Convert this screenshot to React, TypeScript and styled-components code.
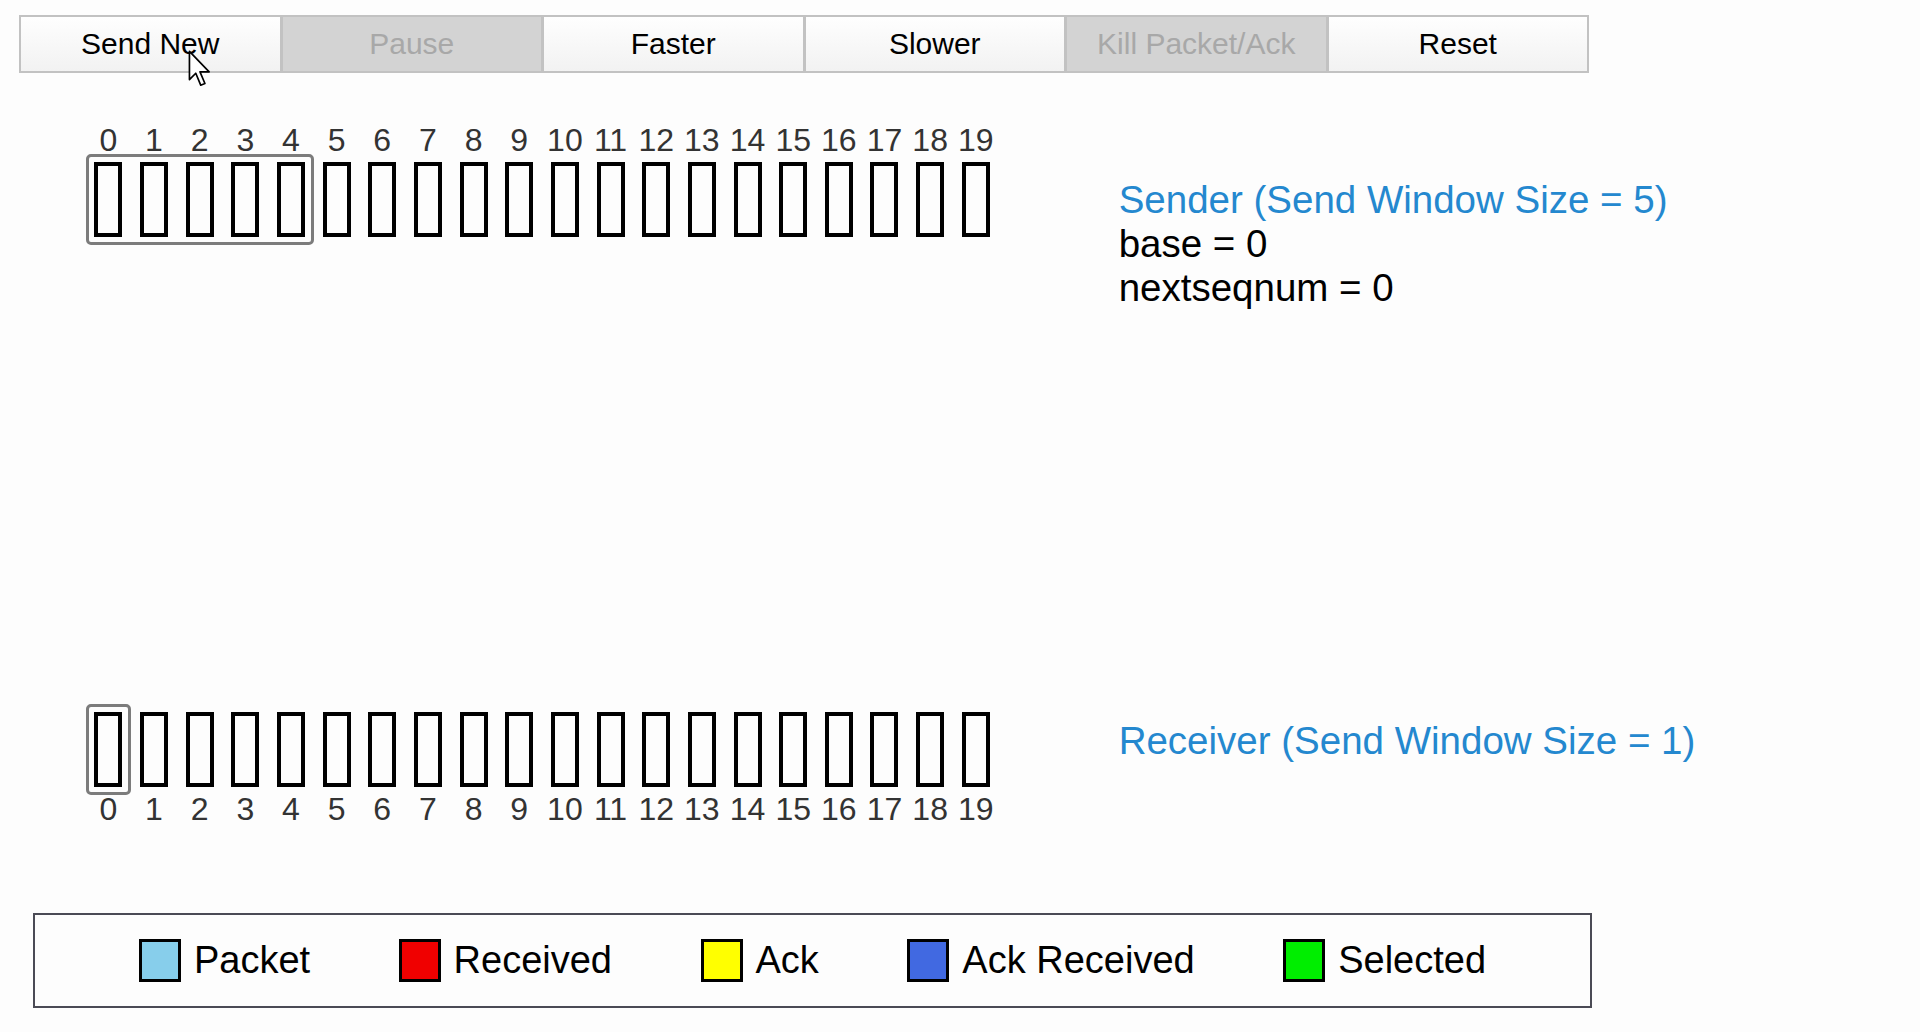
import React from "react";
import styled, { createGlobalStyle } from "styled-components";

const GlobalStyle = createGlobalStyle`
  html, body {
    margin: 0;
    padding: 0;
    background: #fdfdfd;
  }
  body {
    font-family: "Liberation Sans", Arial, sans-serif;
    color: #000;
  }
`;

const Page = styled.div`
  position: relative;
  width: 1920px;
  height: 1032px;
  overflow: hidden;
  padding-top: 15px;
  box-sizing: border-box;
`;

const Toolbar = styled.div`
  position: relative;
  display: flex;
  margin-left: 20px;
  width: 1569px;
  height: 58px;
`;

const ToolButton = styled.button<{ $off?: boolean }>`
  flex: 1;
  height: 58px;
  margin: 0 0 0 -1px;
  padding: 0;
  border: 2px solid #c2c2c2;
  background: ${(p) => (p.$off ? "#d3d3d3" : "linear-gradient(#fefefe, #f2f2f2)")};
  color: ${(p) => (p.$off ? "#a8a8a8" : "#000")};
  font-family: "Liberation Sans", Arial, sans-serif;
  font-size: 30px;
  cursor: default;
`;

const Pointer = styled.svg`
  position: absolute;
  left: 168px;
  top: 35px;
`;

const Lane = styled.section<{ $gap: number }>`
  display: flex;
  align-items: flex-start;
  height: 119px;
  margin-top: ${(p) => p.$gap}px;
`;

const SeqGrid = styled.div<{ $digitsFirst: boolean }>`
  display: grid;
  grid-template-columns: repeat(20, 45.67px);
  grid-template-rows: ${(p) => (p.$digitsFirst ? "28px 91px" : "91px 28px")};
  margin-left: 85.5px;
`;

const SeqNum = styled.span<{ $row: number; $col: number }>`
  grid-row: ${(p) => p.$row};
  grid-column: ${(p) => p.$col};
  justify-self: center;
  font-size: 32px;
  line-height: 28px;
  color: #333;
`;

const Slot = styled.div<{ $row: number; $col: number }>`
  grid-row: ${(p) => p.$row};
  grid-column: ${(p) => p.$col};
  justify-self: center;
  align-self: center;
  width: 28px;
  height: 75px;
  box-sizing: border-box;
  border: 4px solid #000;
  background: #fdfdfd;
`;

const Window = styled.div<{ $row: number; $span: number }>`
  grid-row: ${(p) => p.$row};
  grid-column: 1 / span ${(p) => p.$span};
  border: 3px solid #7c7c7c;
  border-radius: 5px;
  z-index: 1;
  pointer-events: none;
`;

const Info = styled.div<{ $offset: number }>`
  flex-shrink: 0;
  margin-left: 120px;
  margin-top: ${(p) => p.$offset}px;
  font-size: 38.5px;
  line-height: 44px;
`;

const InfoTitle = styled.div`
  color: #2488cf;
`;

const Legend = styled.div`
  display: flex;
  align-items: center;
  justify-content: center;
  gap: 88.5px;
  margin: 90px 0 0 33px;
  width: 1559px;
  height: 95px;
  box-sizing: border-box;
  border: 2px solid #4b4b55;
`;

const LegendItem = styled.div`
  display: flex;
  align-items: center;
  gap: 13px;
  font-size: 38px;
`;

const Swatch = styled.span<{ $color: string }>`
  width: 42px;
  height: 43px;
  box-sizing: border-box;
  border: 3px solid #000;
  background: ${(p) => p.$color};
`;

const buttons = [
  { label: "Send New" },
  { label: "Pause", off: true },
  { label: "Faster" },
  { label: "Slower" },
  { label: "Kill Packet/Ack", off: true },
  { label: "Reset" },
];

const legend = [
  { label: "Packet", color: "#87ceeb" },
  { label: "Received", color: "#f00000" },
  { label: "Ack", color: "#ffff00" },
  { label: "Ack Received", color: "#4169e1" },
  { label: "Selected", color: "#00ee00" },
];

const seq = Array.from({ length: 20 }, (_, i) => i);

function SeqRow({ digitsFirst, windowSize }: { digitsFirst: boolean; windowSize: number }) {
  const numRow = digitsFirst ? 1 : 2;
  const slotRow = digitsFirst ? 2 : 1;
  return (
    <SeqGrid $digitsFirst={digitsFirst}>
      {seq.map((i) => (
        <SeqNum key={"n" + i} $row={numRow} $col={i + 1}>
          {i}
        </SeqNum>
      ))}
      {seq.map((i) => (
        <Slot key={"s" + i} $row={slotRow} $col={i + 1} />
      ))}
      <Window $row={slotRow} $span={windowSize} />
    </SeqGrid>
  );
}

export default function App() {
  return (
    <Page>
      <GlobalStyle />
      <Toolbar>
        {buttons.map((b) => (
          <ToolButton key={b.label} $off={b.off}>
            {b.label}
          </ToolButton>
        ))}
        {/* mouse pointer hovering Send New */}
        <Pointer width="24" height="38" viewBox="0 0 17 27">
          <path
            d="M1 1 L1 21 L5.5 16.5 L9 25 L12 23.8 L8.5 15.5 L15 15.5 Z"
            fill="#fff"
            stroke="#000"
            strokeWidth="1.2"
            strokeLinejoin="round"
          />
        </Pointer>
      </Toolbar>

      <Lane $gap={53}>
        <SeqRow digitsFirst windowSize={5} />
        <Info $offset={52}>
          <InfoTitle>Sender (Send Window Size = 5)</InfoTitle>
          <div>base = 0</div>
          <div>nextseqnum = 0</div>
        </Info>
      </Lane>

      <Lane $gap={459}>
        <SeqRow digitsFirst={false} windowSize={1} />
        <Info $offset={15}>
          <InfoTitle>Receiver (Send Window Size = 1)</InfoTitle>
        </Info>
      </Lane>

      <Legend>
        {legend.map((l) => (
          <LegendItem key={l.label}>
            <Swatch $color={l.color} />
            {l.label}
          </LegendItem>
        ))}
      </Legend>
    </Page>
  );
}
